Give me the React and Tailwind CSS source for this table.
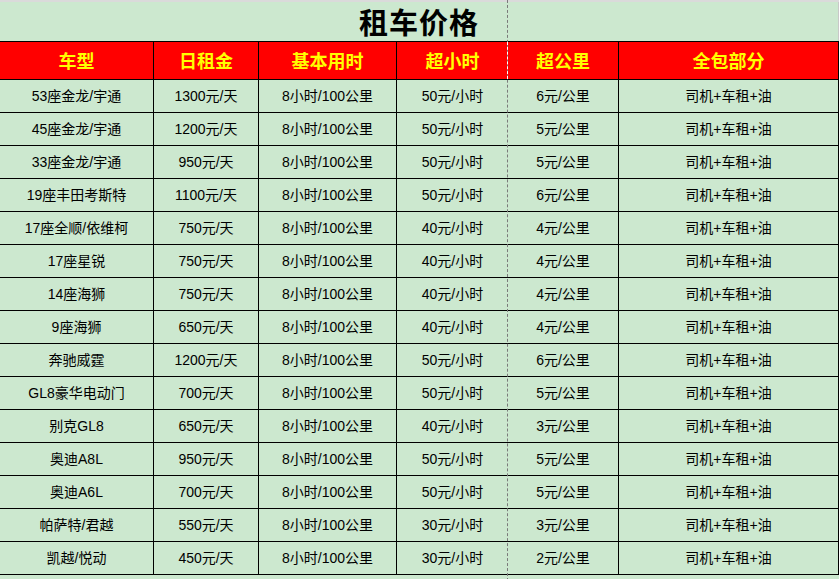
import React from 'react';

const rows = [
  ['53座金龙/宇通', '1300元/天', '50元/小时', '6元/公里'],
  ['45座金龙/宇通', '1200元/天', '50元/小时', '5元/公里'],
  ['33座金龙/宇通', '950元/天', '50元/小时', '5元/公里'],
  ['19座丰田考斯特', '1100元/天', '50元/小时', '6元/公里'],
  ['17座全顺/依维柯', '750元/天', '40元/小时', '4元/公里'],
  ['17座星锐', '750元/天', '40元/小时', '4元/公里'],
  ['14座海狮', '750元/天', '40元/小时', '4元/公里'],
  ['9座海狮', '650元/天', '40元/小时', '4元/公里'],
  ['奔驰威霆', '1200元/天', '50元/小时', '6元/公里'],
  ['GL8豪华电动门', '700元/天', '50元/小时', '5元/公里'],
  ['别克GL8', '650元/天', '40元/小时', '3元/公里'],
  ['奥迪A8L', '950元/天', '50元/小时', '5元/公里'],
  ['奥迪A6L', '700元/天', '50元/小时', '5元/公里'],
  ['帕萨特/君越', '550元/天', '30元/小时', '3元/公里'],
  ['凯越/悦动', '450元/天', '30元/小时', '2元/公里'],
];

const heads = ['车型', '日租金', '基本用时', '超小时', '超公里', '全包部分'];

const cols = 'grid grid-cols-[154px_105px_138px_111px_111px_220px]';

const App = () => {
  return (
    <div className="w-[840px] h-[579px] bg-white overflow-hidden" style={{ fontFamily: '"Liberation Sans", "Noto Sans CJK SC", sans-serif' }}>
      <div className="relative w-[839px] bg-[#cce8cf]">
        {/* top gridline strip */}
        <div className="h-[2px] bg-[#dadada]"></div>

        {/* title */}
        <div className="h-[39px] flex items-center justify-center border-r border-[#c8c8c8]">
          <h1 className="text-[29px] font-bold text-black tracking-[1px] leading-none" style={{ fontFamily: '"Noto Sans CJK SC", sans-serif' }}>租车价格</h1>
        </div>

        {/* header */}
        <div className={`${cols} h-[39px] bg-[#ff0000] border-t border-b border-black`}>
          {heads.map((h, i) => (
            <div
              key={h}
              className={`flex items-center justify-center text-[18px] font-bold text-[#ffff00] ${i === 3 ? '' : 'border-r border-black'}`}
              style={{ fontFamily: '"Noto Sans CJK SC", sans-serif' }}
            >
              {h}
            </div>
          ))}
        </div>

        {/* body rows */}
        {rows.map((r) => (
          <div key={r[0]} className={`${cols} h-[33px] border-b border-black text-[14px] text-black`}>
            <div className="flex items-center justify-center border-r border-black">{r[0]}</div>
            <div className="flex items-center justify-center border-r border-black">{r[1]}</div>
            <div className="flex items-center justify-center border-r border-black">8小时/100公里</div>
            <div className="flex items-center justify-center">{r[2]}</div>
            <div className="flex items-center justify-center border-r border-black">{r[3]}</div>
            <div className="flex items-center justify-center border-r border-black">司机+车租+油</div>
          </div>
        ))}

        <div className="h-[6px]"></div>

        {/* page break lines */}
        <div className="absolute top-0 bottom-0 left-[507px] border-l border-dashed border-[#7a7a7a]"></div>
        <div className="absolute top-[42px] h-[37px] left-[507px] border-l border-dashed border-white"></div>
      </div>
    </div>
  );
};

export default App;
